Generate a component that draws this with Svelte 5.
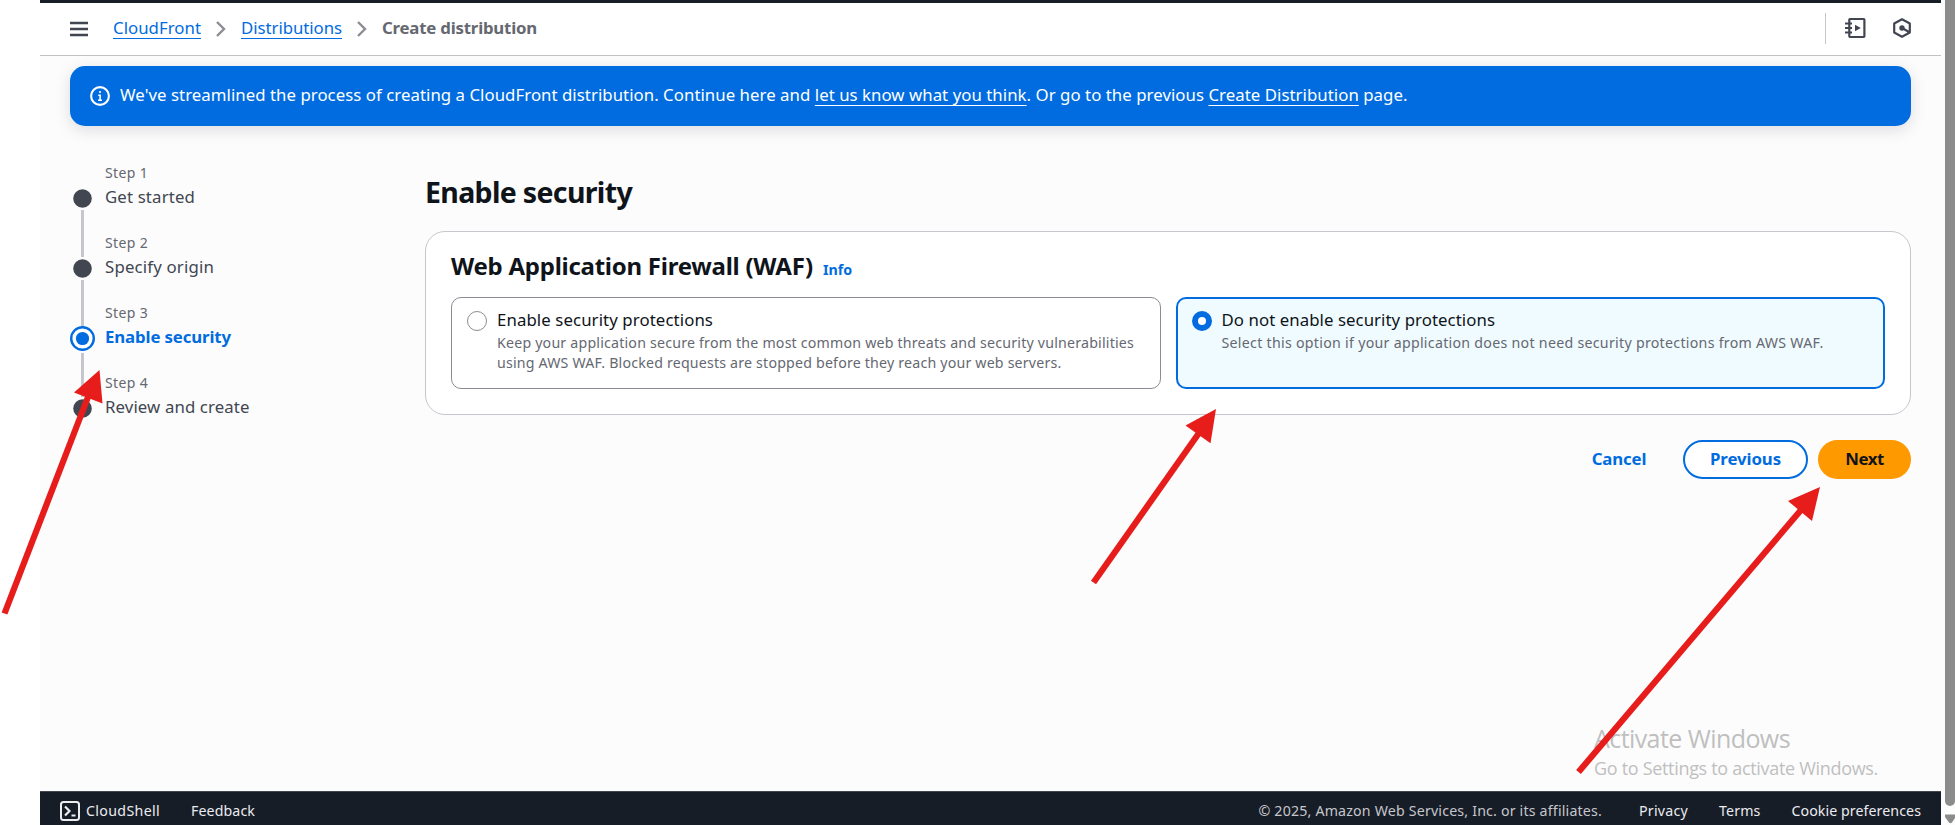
<script>
  const steps = [
    { n: 1, label: 'Get started', w: 90 },
    { n: 2, label: 'Specify origin', w: 109 },
    { n: 3, label: 'Enable security', w: 126, active: true },
    { n: 4, label: 'Review and create', w: 144.5 }
  ];
  const arrows = [
    { shaft: 'M4.5 613.5 88 397', head: '99.5,370 74,392.5 102.5,403.5' },
    { shaft: 'M1093.5 582.5 1199 433', head: '1216,409 1185.5,425.5 1210.5,443.3' },
    { shaft: 'M1578.5 772 1801 510', head: '1820,487 1788,501 1812,521' }
  ];

  // Tracks a label so that it fills the given width in pixels.
  function fit(node, width) {
    const natural = node.getBoundingClientRect().width;
    const count = node.textContent.trim().length;
    node.style.letterSpacing = `${(width - natural) / count}px`;
  }
</script>

<div class="screen">
  <div class="app">
    <header>
      <svg class="menu" width="18" height="16" viewBox="0 0 18 16"><path d="M0 2h18M0 8h18M0 14h18" stroke="#424650" stroke-width="2.3" /></svg>
      <nav>
        <a href="#cf"><span use:fit={88}>CloudFront</span></a>
        <svg width="10" height="16" viewBox="0 0 10 16"><path d="M1 1l7 7-7 7" /></svg>
        <a href="#d"><span use:fit={101}>Distributions</span></a>
        <svg width="10" height="16" viewBox="0 0 10 16"><path d="M1 1l7 7-7 7" /></svg>
        <b><span use:fit={155}>Create distribution</span></b>
      </nav>
      <div class="tools">
        <svg width="21" height="22" viewBox="0 0 21 22" fill="none" stroke="#424650">
          <path d="M5 2h13.700q.7 0 .7.7v16.6q0 .7-.7.7H5q-.7 0-.7-.7V2.700q0-.7.7-.7z" stroke-width="2.2" />
          <path d="M0 6.500h7M0 11h7M0 15.500h7" stroke-width="2" />
          <path d="M10 7.800v6.400l5.800-3.200z" fill="#424650" stroke="none" />
        </svg>
        <svg width="18" height="22" viewBox="0 0 18 22" fill="none" stroke="#424650" stroke-width="2.2" stroke-linejoin="round">
          <path d="M9 2.200l7.800 4.300v9L9 19.800l-7.800-4.300v-9zM9 11l7.500 4.200" />
          <circle cx="9" cy="11" r="2.700" fill="#424650" stroke="none" />
        </svg>
      </div>
    </header>

    <div class="banner">
      <svg width="20" height="20" viewBox="0 0 20 20" fill="none" stroke="#fff" stroke-width="2.1">
        <circle cx="10" cy="10" r="8.900" />
        <path d="M10 5v2.100M8.200 9.300h1.900v5M8 14.200h4" stroke-width="1.600" />
      </svg>
      <span use:fit={1287.500}>We've streamlined the process of creating a CloudFront distribution. Continue here and <a href="#t">let us know what you think</a>. Or go to the previous <a href="#c">Create Distribution</a> page.</span>
    </div>

    <main>
      <ol>
        {#each steps as s}
          <li class:active={s.active}>
            <div class="rail">
              {#if s.active}
                <svg width="25" height="26" viewBox="0.5 0 25 26"><circle cx="13" cy="13.500" r="11.300" fill="#fff" stroke="#006ce0" stroke-width="2.400" /><circle cx="13" cy="13.500" r="6.600" fill="#006ce0" /></svg>
              {:else}
                <svg width="25" height="26" viewBox="0.5 0 25 26"><circle cx="13" cy="13.500" r="9.300" fill="#424650" /></svg>
              {/if}
              {#if s.n < 4}<i></i>{/if}
            </div>
            <div class="step">
              <small><span use:fit={43}>Step {s.n}</span></small>
              <div><span use:fit={s.w}>{s.label}</span></div>
            </div>
          </li>
        {/each}
      </ol>

      <section>
        <h1><span use:fit={207}>Enable security</span></h1>
        <div class="card">
          <h2><span use:fit={362}>Web Application Firewall (WAF)</span><a href="#i"><span use:fit={29}>Info</span></a></h2>
          <div class="tiles">
            <div class="tile">
              <span class="radio"></span>
              <div>
                <p class="label"><span use:fit={216}>Enable security protections</span></p>
                <p class="desc"><span use:fit={637}>Keep your application secure from the most common web threats and security vulnerabilities</span></p>
                <p class="desc"><span use:fit={564.500}>using AWS WAF. Blocked requests are stopped before they reach your web servers.</span></p>
              </div>
            </div>
            <div class="tile on">
              <span class="radio"></span>
              <div>
                <p class="label"><span use:fit={273.500}>Do not enable security protections</span></p>
                <p class="desc"><span use:fit={602}>Select this option if your application does not need security protections from AWS WAF.</span></p>
              </div>
            </div>
          </div>
        </div>
        <div class="actions">
          <button class="link"><span use:fit={54.5}>Cancel</span></button>
          <button class="prev"><span use:fit={71}>Previous</span></button>
          <button class="next"><span use:fit={38.5}>Next</span></button>
        </div>
      </section>
    </main>

    <footer>
      <svg width="20" height="20" viewBox="0 0 20 20" fill="none" stroke="#ebebf0" stroke-width="2">
        <rect x="1" y="1" width="18" height="18" rx="2.500" />
        <path d="M5 5.500l4.500 4.500L5 14.500M11.500 14.500h4" stroke-width="2.200" />
      </svg>
      <span class="shell"><span use:fit={74}>CloudShell</span></span>
      <span class="feedback"><span use:fit={64}>Feedback</span></span>
      <span class="copy"><span use:fit={343.5}>© 2025, Amazon Web Services, Inc. or its affiliates.</span></span>
      <span class="f1"><span use:fit={49}>Privacy</span></span>
      <span class="f2"><span use:fit={41.500}>Terms</span></span>
      <span><span use:fit={129.500}>Cookie preferences</span></span>
    </footer>
  </div>

  <div class="scroll">
    <div class="thumb"></div>
    <svg width="10" height="10" viewBox="0 0 10 10"><path d="M0 0.500h11v2L7 8.500q-1.500 1.500-3 0L0 3z" fill="#8b8b8b" /></svg>
  </div>

  <div class="watermark">
    <div class="w1"><span use:fit={196}>Activate Windows</span></div>
    <div class="w2"><span use:fit={284}>Go to Settings to activate Windows.</span></div>
  </div>

  <svg class="arrows" width="1955" height="825" viewBox="0 0 1955 825">
    {#each arrows as a}
      <path d={a.shaft} stroke="#e71d1c" stroke-width="6.200" />
      <polygon points={a.head} fill="#e71d1c" />
    {/each}
  </svg>
</div>

<style>
  :global(body) { margin: 0; background: #fff; overflow: hidden; }
  * { box-sizing: border-box; }
  .screen {
    position: relative; display: flex; width: 1955px; height: 825px; padding-left: 40px;
    font-family: 'Noto Sans', sans-serif; font-size: 16.8px; line-height: 25px; color: #0f141a;
    overflow: hidden; white-space: nowrap;
  }
  svg { display: block; flex: none; }
  a { color: #006ce0; text-decoration: underline; text-decoration-thickness: 1px; text-underline-offset: 4px; text-decoration-skip-ink: none; }
  p, h1, h2, ol { margin: 0; padding: 0; }
  .app { width: 1901px; display: flex; flex-direction: column; background: #fcfcfd; }
  header {
    height: 56px; flex: none; display: flex; align-items: center; padding: 0 30px;
    background: #fff; border-top: 3px solid #181d27; border-bottom: 1px solid #c1c1c5;
  }
  .menu { margin-right: 25px; }
  nav { display: flex; align-items: center; gap: 15px; margin-top: -4px; }
  nav svg { fill: none; stroke: #8c8c94; stroke-width: 2.4; margin-top: 4px; }
  nav b { color: #656871; }
  .tools { margin-left: auto; margin-top: -2px; display: flex; align-items: center; gap: 27px; height: 31px; padding-left: 19px; border-left: 1px solid #c6c6cd; }
  .banner {
    flex: none; height: 60px; margin: 10px 30px 0; padding: 0 20px; display: flex; align-items: center; gap: 10px;
    background: #006ce0; color: #fff; border-radius: 15px; box-shadow: 0 4px 16px #00071620;
  }
  .banner a { color: #fff; }
  .banner > span { margin-top: -4px; }
  main { flex: 1; display: flex; padding: 34px 30px 0 29px; }
  ol { width: 356px; list-style: none; }
  li { display: flex; height: 70px; gap: 10px; }
  .rail { display: flex; flex-direction: column; align-items: center; width: 25px; margin-left: 1px; padding-top: 25px; }
  .rail i { flex: none; width: 3px; height: 47px; background: #c6c6cd; margin-top: -1px; }
  li.active .rail i { margin-top: 2px; height: 44px; }
  .step { color: #424650; }
  small { display: block; font-size: 14px; line-height: 25px; color: #656871; }
  .step > div { line-height: 23px; }
  .active .step > div { color: #006ce0; font-weight: 700; }
  section { flex: 1; }
  h1 { font-size: 28.5px; line-height: 38px; font-weight: 700; margin-top: 13px; }
  .card { margin-top: 20px; height: 184px; padding: 19px 25px; border: 1px solid #c6c6cd; border-radius: 20px; background: #fff; }
  h2 { display: flex; align-items: baseline; gap: 10px; height: 30px; font-size: 24px; line-height: 30px; }
  h2 a { font-size: 14.2px; text-decoration: none; }
  .tiles { display: grid; grid-template-columns: 1fr 1fr; gap: 15px; margin-top: 16px; height: 92px; }
  .tile { display: flex; gap: 10px; padding: 10px 15px; border: 1px solid #8c8c94; border-radius: 10px; }
  .tile.on { padding: 9px 14px; border: 2px solid #006ce0; background: #f0fbff; }
  .radio { flex: none; width: 20px; height: 20px; margin-top: 3px; border: 1px solid #8c8c94; border-radius: 50%; background: #fff; }
  .on .radio { border: 6px solid #006ce0; }
  .label { line-height: 25px; margin: -1px 0 1px; }
  .desc { font-size: 14.2px; line-height: 20px; color: #656871; }
  .actions { display: flex; justify-content: flex-end; margin-top: 25px; }
  button { height: 39px; padding: 0 0 2px; border: 0; border-radius: 20px; font: 700 16.8px/33px 'Noto Sans', sans-serif; background: none; color: #006ce0; }
  .link { width: 104px; margin-right: 12px; }
  .prev { width: 125px; border: 2px solid #006ce0; background: #fff; margin-right: 10px; }
  .next { width: 93px; background: #ff9900; color: #0f141a; }
  footer {
    height: 34px; flex: none; display: flex; align-items: center; padding: 4px 20px 0; background: #161d26;
    border-top: 1px solid #424650; color: #ebebf0; font-size: 14.2px; line-height: 20px;
  }
  .shell { margin-left: 6px; margin-right: 31px; }
  .copy { margin-left: auto; margin-right: 37px; color: #c6c6cd; }
  .f1 { margin-right: 31px; }
  .f2 { margin-right: 31px; }
  .scroll { width: 14px; padding-left: 4px; background: #fcfcfc; }
  .thumb { height: 806px; background: #8b8b8b; border-radius: 0 0 5px 5px; margin-bottom: 8px; }
  .watermark { position: absolute; left: 1594px; top: 720px; font-family: 'Open Sans', sans-serif; color: #bfbfbf; }
  .w1 { font-size: 25px; line-height: 36px; }
  .w2 { font-size: 18px; line-height: 24px; }
  .arrows { position: absolute; left: 0; top: 0; }
</style>
